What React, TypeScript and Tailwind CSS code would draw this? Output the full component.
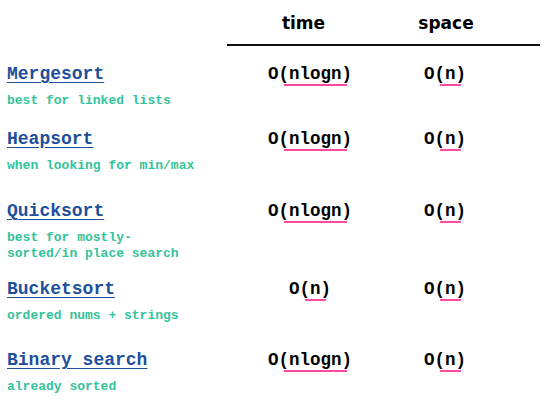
const rows = [
  { name: 'Mergesort', note: ['best for linked lists'], time: 'nlogn', space: 'n', gap: 'mt-[17px]' },
  { name: 'Heapsort', note: ['when looking for min/max'], time: 'nlogn', space: 'n', gap: 'mt-[19px]' },
  { name: 'Quicksort', note: ['best for mostly-', 'sorted/in place search'], time: 'nlogn', space: 'n', gap: 'mt-[26px]' },
  { name: 'Bucketsort', note: ['ordered nums + strings'], time: 'n', space: 'n', gap: 'mt-[16px]' },
  { name: 'Binary search', note: ['already sorted'], time: 'nlogn', space: 'n', gap: 'mt-[25px]' },
];

function BigO({ inner }: { inner: string }) {
  return (
    <span className="font-bold text-[17.5px] leading-[22px] text-black">
      O
      <span className="relative">
        ({inner})
        <span className="absolute left-[6px] right-[5px] bottom-[-2px] h-[2px] bg-[#ff4aa0]" />
      </span>
    </span>
  );
}

export default function App() {
  return (
    <div className="w-[560px] h-[412px] bg-white overflow-hidden font-['Liberation_Mono','Courier_New',monospace]">
      <div className="flex pt-[13px]">
        <div className="w-[227px]" />
        <div className="flex w-[313px] border-b-2 border-[#111] pb-[11px] font-['DejaVu_Sans',Verdana,sans-serif] font-bold text-[17px] leading-[20px] text-black">
          <div className="w-[153px] text-center">time</div>
          <div className="w-[132px] text-center">space</div>
        </div>
      </div>

      {rows.map((r) => (
        <div key={r.name} className={`flex ${r.gap}`}>
          <div className="w-[227px] pl-[7px]">
            <div className="text-[18px] leading-[22px] font-bold text-[#1d4f9b] underline underline-offset-[3px]">
              {r.name}
            </div>
            <div className="mt-[8px] text-[13px] leading-[16px] font-bold text-[#33c39a]">
              {r.note.map((line) => (
                <div key={line}>{line}</div>
              ))}
            </div>
          </div>
          <div className="w-[166px] text-center">
            <BigO inner={r.time} />
          </div>
          <div className="w-[104px] text-center">
            <BigO inner={r.space} />
          </div>
        </div>
      ))}
    </div>
  );
}
